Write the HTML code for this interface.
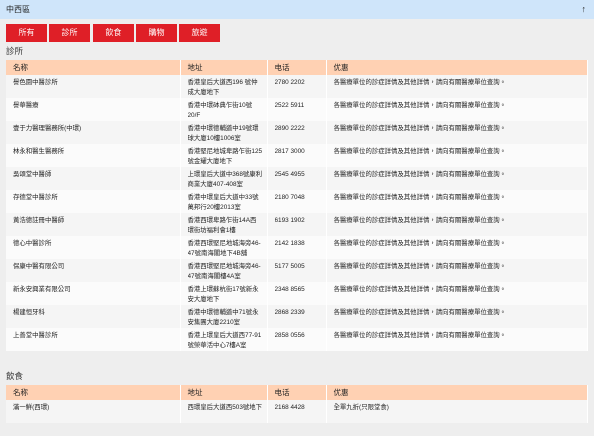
<!DOCTYPE html>
<html><head><meta charset="utf-8"><style>
*{margin:0;padding:0;box-sizing:border-box}
body{width:600px;height:436px;background:#fff;font-family:"Liberation Sans","Noto Sans CJK TC",sans-serif;font-size:6.4px;color:#222;overflow:hidden;position:relative}
.wrap{position:absolute;left:0;top:0;width:594px;height:436px;background:#eeeeee}
.bar{height:19px;background:#cfe5fa;font-size:8px;line-height:19px;padding-left:6px;color:#222;position:relative}
.bar span{position:absolute;right:8px;top:0;font-size:9px;font-weight:bold}
.btns{position:absolute;top:24px;left:6px}
.btns div{position:absolute;top:0;height:18px;background:#df1f27;color:#fff;font-size:8px;line-height:18px;text-align:center}
h3{position:absolute;left:6px;font-size:8.5px;font-weight:normal;color:#333}
table{position:absolute;left:6px;width:582px;border-collapse:collapse;table-layout:fixed}
th{background:#ffd1b3;height:15px;font-weight:normal;text-align:left;padding-left:7px;font-size:7.5px;border-right:1px solid #fff}
td{height:23px;vertical-align:top;padding:0 0 0 7px;border-right:1px solid #fff}
td div{height:23px;overflow:hidden;padding-top:3px;line-height:9.5px;padding-right:4px}
tr:nth-child(odd) td{background:#f5f5f5}
tr:nth-child(even) td{background:#fbfbfb}
</style></head><body><div class="wrap">
<div class="bar">中西區<span>↑</span></div>
<div class="btns">
<div style="left:0;width:41px">所有</div>
<div style="left:43px;width:41px">診所</div>
<div style="left:87px;width:41px">飲食</div>
<div style="left:130px;width:41px">購物</div>
<div style="left:173px;width:41px">旅遊</div>
</div>
<h3 style="top:45px">診所</h3>
<table style="top:60px">
<colgroup><col style="width:174px"><col style="width:87px"><col style="width:59px"><col></colgroup>
<thead><tr><th>名称</th><th>地址</th><th>电话</th><th>优惠</th></tr></thead>
<tbody>
<tr><td><div>譽色園中醫診所</div></td><td><div>香港皇后大道西196 號仲成大廈地下</div></td><td><div>2780 2202</div></td><td><div>各醫療單位的診症詳情及其他詳情，請向有關醫療單位查詢。</div></td></tr>
<tr><td><div>譽華醫療</div></td><td><div>香港中環砵典乍街10號20/F</div></td><td><div>2522 5911</div></td><td><div>各醫療單位的診症詳情及其他詳情，請向有關醫療單位查詢。</div></td></tr>
<tr><td><div>壹于力醫理醫務所(中環)</div></td><td><div>香港中環德輔道中19號環球大廈10樓1006室</div></td><td><div>2890 2222</div></td><td><div>各醫療單位的診症詳情及其他詳情，請向有關醫療單位查詢。</div></td></tr>
<tr><td><div>林永和醫生醫務所</div></td><td><div>香港堅尼地城卑路乍街125號金耀大廈地下</div></td><td><div>2817 3000</div></td><td><div>各醫療單位的診症詳情及其他詳情，請向有關醫療單位查詢。</div></td></tr>
<tr><td><div>吳頌堂中醫師</div></td><td><div>上環皇后大道中368號康利商業大廈407-408室</div></td><td><div>2545 4955</div></td><td><div>各醫療單位的診症詳情及其他詳情，請向有關醫療單位查詢。</div></td></tr>
<tr><td><div>存德堂中醫診所</div></td><td><div>香港中環皇后大道中33號萬邦行20樓2013室</div></td><td><div>2180 7048</div></td><td><div>各醫療單位的診症詳情及其他詳情，請向有關醫療單位查詢。</div></td></tr>
<tr><td><div>黃浩德註冊中醫師</div></td><td><div>香港西環卑路乍街14A西環街坊福利會1樓</div></td><td><div>6193 1902</div></td><td><div>各醫療單位的診症詳情及其他詳情，請向有關醫療單位查詢。</div></td></tr>
<tr><td><div>德心中醫診所</div></td><td><div>香港西環堅尼地城海旁46-47號南海閣地下4B舖</div></td><td><div>2142 1838</div></td><td><div>各醫療單位的診症詳情及其他詳情，請向有關醫療單位查詢。</div></td></tr>
<tr><td><div>保康中醫有限公司</div></td><td><div>香港西環堅尼地城海旁46-47號南海閣樓4A室</div></td><td><div>5177 5005</div></td><td><div>各醫療單位的診症詳情及其他詳情，請向有關醫療單位查詢。</div></td></tr>
<tr><td><div>新永安興業有限公司</div></td><td><div>香港上環蘇杭街17號新永安大廈地下</div></td><td><div>2348 8565</div></td><td><div>各醫療單位的診症詳情及其他詳情，請向有關醫療單位查詢。</div></td></tr>
<tr><td><div>楊建恒牙科</div></td><td><div>香港中環德輔道中71號永安集團大廈2210室</div></td><td><div>2868 2339</div></td><td><div>各醫療單位的診症詳情及其他詳情，請向有關醫療單位查詢。</div></td></tr>
<tr><td><div>上善堂中醫診所</div></td><td><div>香港上環皇后大道西77-91號榮華活中心7樓A室</div></td><td><div>2858 0556</div></td><td><div>各醫療單位的診症詳情及其他詳情，請向有關醫療單位查詢。</div></td></tr>
</tbody></table>
<h3 style="top:370px">飲食</h3>
<table style="top:385px">
<colgroup><col style="width:174px"><col style="width:87px"><col style="width:59px"><col></colgroup>
<thead><tr><th>名称</th><th>地址</th><th>电话</th><th>优惠</th></tr></thead>
<tbody><tr><td><div>滿一鮮(西環)</div></td><td><div>西環皇后大道西503號地下</div></td><td><div>2168 4428</div></td><td><div>全單九折(只限堂食)</div></td></tr></tbody>
</table>
</div></body></html>
